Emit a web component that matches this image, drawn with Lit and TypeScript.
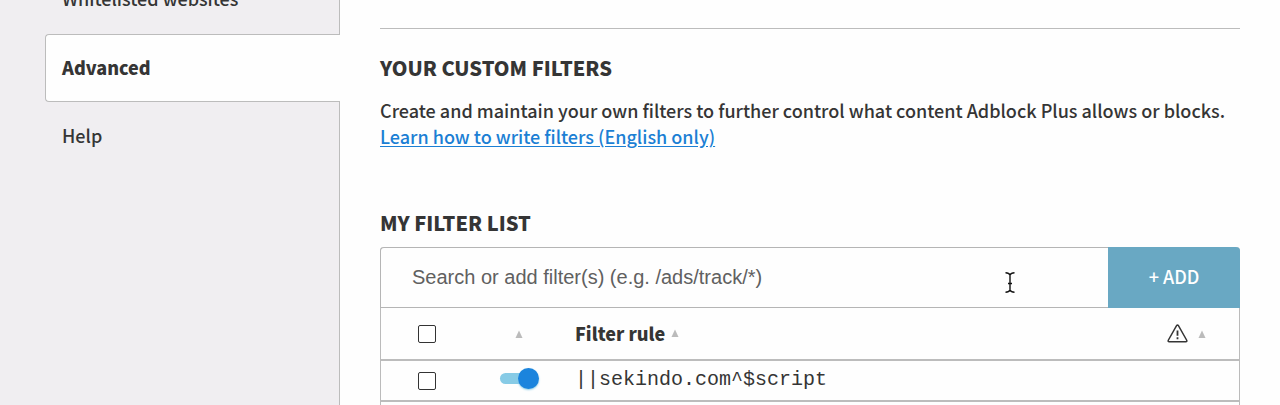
import { LitElement, html, css } from "lit";
import { customElement, property, state } from "lit/decorators.js";

interface FilterRule {
  text: string;
  enabled: boolean;
}

@customElement("options-nav")
class OptionsNav extends LitElement {
  @property() current = "Advanced";

  static styles = css`
    :host {
      display: flex;
      flex: none;
      width: 340px;
      background: #f0eef1;
      font-size: 18px;
      line-height: 26px;
    }
    .rail {
      flex: 1;
      display: flex;
      flex-direction: column;
    }
    .tabs {
      list-style: none;
      margin: -35px 0 0;
      padding: 0;
    }
    .tab,
    .rest {
      padding-left: 45px;
      border-right: 1px solid #bcbcbc;
    }
    .rest {
      flex: 1;
    }
    .tab.selected {
      border-right: 0;
    }
    .link {
      display: block;
      padding: 20px 17px 23px;
      color: #353535;
      text-decoration: none;
    }
    .selected .link {
      border: 1px solid #bcbcbc;
      border-right: 0;
      border-radius: 4px 0 0 4px;
      padding: 19px 16px 21px;
      background: #fefefe;
      font-weight: 900;
    }
  `;

  render() {
    const tabs = ["Whitelisted websites", "Advanced", "Help"];
    return html`<nav class="rail">
      <ul class="tabs">
        ${tabs.map(
          (t) => html`<li class="tab ${t === this.current ? "selected" : ""}">
            <a class="link" href="#${t.toLowerCase().replace(" ", "-")}">${t}</a>
          </li>`
        )}
      </ul>
      <div class="rest"></div>
    </nav>`;
  }
}

@customElement("filter-table")
class FilterTable extends LitElement {
  @state() private rules: FilterRule[] = [
    { text: "||sekindo.com^$script", enabled: true },
  ];

  static styles = css`
    :host {
      display: flex;
      flex-direction: column;
      flex: 1;
      box-sizing: border-box;
      border: solid #bbb;
      border-width: 0 1px;
      border-radius: 4px 4px 0 0;
    }
    .search {
      display: flex;
      height: 61px;
      margin: 0 -1px;
    }
    .query {
      flex: 1;
      min-width: 0;
      box-sizing: border-box;
      border: 1px solid #b5b5b5;
      border-right: 0;
      border-radius: 4px 0 0 0;
      padding: 0 31px;
      background: #fefefe;
      color: #353535;
      font: 20px "Liberation Sans", sans-serif;
      outline: 0;
    }
    .query::placeholder {
      color: #606060;
      opacity: 1;
    }
    .add {
      width: 132px;
      border: 0;
      border-radius: 0 4px 0 0;
      padding: 0 0 3px;
      background: #69a8c3;
      color: #fff;
      font: inherit;
    }
    .rules {
      width: 100%;
      table-layout: fixed;
      border-collapse: collapse;
    }
    .head {
      height: 52px;
    }
    .row {
      height: 41px;
    }
    th,
    td {
      padding: 0;
      text-align: left;
      border-bottom: 2px solid #bcbcbc;
      font-weight: inherit;
    }
    .pick {
      width: 92px;
      text-align: center;
    }
    .status {
      width: 92px;
    }
    .rule {
      padding: 0 0 2px 10px;
    }
    .warn {
      width: 100px;
    }
    .box {
      appearance: none;
      display: block;
      box-sizing: border-box;
      width: 18px;
      height: 18px;
      margin: 0 auto;
      border: 1px solid #333;
      border-radius: 2px;
      background: #fff;
    }
    .switch {
      appearance: none;
      display: flex;
      align-items: center;
      justify-content: flex-start;
      width: 34px;
      height: 11px;
      margin: 0 0 4px 27px;
      border-radius: 6px;
      background: #ccc;
    }
    .switch:checked {
      justify-content: flex-end;
      background: #87cbe6;
    }
    .switch::before {
      content: "";
      flex: none;
      width: 21px;
      height: 21px;
      margin-right: -5px;
      border-radius: 50%;
      background: #1b84dd;
      box-shadow: 0 1px 2px #87cbe6;
    }
    .sort {
      display: flex;
      align-items: center;
      gap: 6px;
      border: 0;
      padding: 0;
      background: none;
      color: #353535;
      font: inherit;
    }
    .name {
      font-weight: 900;
    }
    .status .sort {
      margin: 0 auto;
    }
    .warn .sort {
      gap: 10px;
      padding-left: 28px;
    }
    .code {
      display: block;
      font: 20px "Liberation Mono", monospace;
      color: #353535;
    }
    svg {
      display: block;
    }
  `;

  private arrow() {
    return html`<svg width="8" height="8" viewBox="0 0 8 8" aria-hidden="true"><path d="M4 0.500 7.500 8h-7z" fill="#bbb"/></svg>`;
  }

  render() {
    return html`
      <form class="search" @submit=${(e: Event) => e.preventDefault()}>
        <input
          class="query"
          type="text"
          aria-label="Search or add filters"
          placeholder="Search or add filter(s) (e.g. /ads/track/*)"
        />
        <button class="add">+ ADD</button>
      </form>
      <table class="rules">
        <thead>
          <tr class="head">
            <th class="pick"><input class="box" type="checkbox" aria-label="Select all" /></th>
            <th class="status"><button class="sort" aria-label="Sort by status">${this.arrow()}</button></th>
            <th class="rule">
              <button class="sort"><span class="name">Filter rule</span>${this.arrow()}</button>
            </th>
            <th class="warn">
              <button class="sort" aria-label="Sort by warnings">
                <svg width="21" height="19" viewBox="0 0 21 19" fill="none" stroke="#353535">
                  <path d="M9.7 1.5Q10.5.3 11.3 1.5L19.7 16.2Q20.3 17.8 18.8 17.8H2.2Q.7 17.8 1.3 16.2Z" stroke-width="1.5" />
                  <path d="M10.5 6.5v5.3M10.5 13.3v2" stroke-width="1.8" />
                </svg>
                ${this.arrow()}
              </button>
            </th>
          </tr>
        </thead>
        <tbody>
          ${this.rules.map(
            (r) => html`<tr class="row">
              <td class="pick"><input class="box" type="checkbox" aria-label="Select ${r.text}" /></td>
              <td class="status">
                <input class="switch" type="checkbox" role="switch" aria-label="Enable ${r.text}" .checked=${r.enabled} />
              </td>
              <td class="rule"><span class="code">${r.text}</span></td>
              <td class="warn"></td>
            </tr>`
          )}
        </tbody>
      </table>
    `;
  }
}

@customElement("app-root")
class AppRoot extends LitElement {
  static styles = css`
    :host {
      display: flex;
      position: relative;
      height: 100vh;
      overflow: hidden;
      background: #fefefe;
      color: #353535;
      font-family: "Noto Sans CJK SC", "Noto Sans", sans-serif;
      font-size: 18px;
      font-weight: 500;
      line-height: 26px;
    }
    .main {
      flex: 1;
      min-width: 0;
      display: flex;
      flex-direction: column;
      padding: 28px 40px 0;
    }
    .custom {
      border-top: 1px solid #bcbcbc;
      padding: 25px 0 60px;
    }
    .title {
      margin: 0;
      font-size: 20px;
      line-height: 28px;
      font-weight: 900;
    }
    .about {
      margin: 15px 0 0;
    }
    .learn {
      color: #1b7fd4;
      text-underline-offset: 2px;
    }
    .list {
      flex: 1;
      display: flex;
      flex-direction: column;
      gap: 10px;
    }
    .pointer {
      position: absolute;
      left: 1005px;
      top: 272px;
      pointer-events: none;
    }
  `;

  render() {
    return html`
      <options-nav></options-nav>
      <main class="main">
        <section class="custom">
          <h2 class="title">YOUR CUSTOM FILTERS</h2>
          <p class="about">
            Create and maintain your own filters to further control what content Adblock Plus allows or blocks.
            <a class="learn" href="#filters">Learn how to write filters (English only)</a>
          </p>
        </section>
        <section class="list">
          <h2 class="title">MY FILTER LIST</h2>
          <filter-table></filter-table>
        </section>
      </main>
      <svg class="pointer" width="10" height="21" viewBox="0 0 10 21" fill="none" stroke="#111" stroke-width="1.4" aria-hidden="true">
        <path d="M.5.8Q4 .8 5 3 6 .8 9.500 .8M5 3V18M.5 20.200Q4 20.200 5 18 6 20.200 9.500 20.200M3 11.500H7" />
      </svg>
    `;
  }
}
